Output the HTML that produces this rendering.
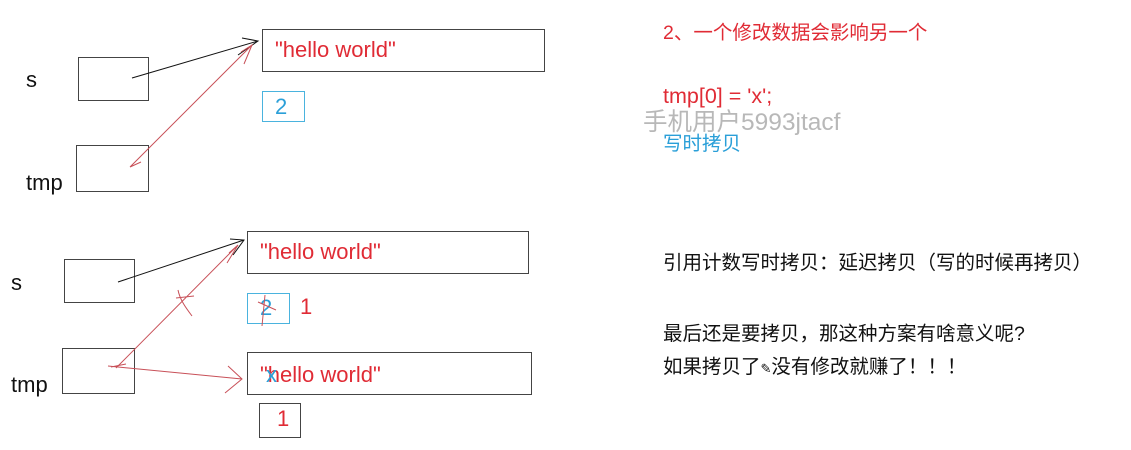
<!DOCTYPE html>
<html><head><meta charset="utf-8"><style>
html,body{margin:0;padding:0;background:#fff;width:1131px;height:450px;overflow:hidden;position:relative}
.a{position:absolute;white-space:nowrap;font-family:"Liberation Sans","Noto Sans CJK SC",sans-serif;line-height:1.2}
.b{position:absolute;border:1.5px solid #444;box-sizing:border-box}
.r{color:#e02b35}.k{color:#111}.bl{color:#2a9fd8}
</style></head><body>
<div class="b" style="left:78px;top:57px;width:71px;height:44px"></div>
<div class="b" style="left:76px;top:145px;width:73px;height:47px"></div>
<div class="b" style="left:262px;top:29px;width:283px;height:43px"></div>
<div class="b" style="left:262px;top:91px;width:43px;height:31px;border-color:#4ab3de"></div>
<div class="a k" style="left:26px;top:67px;font-size:22px">s</div>
<div class="a k" style="left:26px;top:170px;font-size:22px">tmp</div>
<div class="a r" style="left:275px;top:37px;font-size:22px">"hello world"</div>
<div class="a bl" style="left:275px;top:94px;font-size:22px">2</div>

<div class="b" style="left:64px;top:259px;width:71px;height:44px"></div>
<div class="b" style="left:62px;top:348px;width:73px;height:46px"></div>
<div class="b" style="left:247px;top:231px;width:282px;height:43px"></div>
<div class="b" style="left:247px;top:293px;width:43px;height:31px;border-color:#4ab3de"></div>
<div class="b" style="left:247px;top:352px;width:285px;height:43px"></div>
<div class="b" style="left:259px;top:403px;width:42px;height:35px"></div>
<div class="a k" style="left:11px;top:270px;font-size:22px">s</div>
<div class="a k" style="left:11px;top:372px;font-size:22px">tmp</div>
<div class="a r" style="left:260px;top:239px;font-size:22px">"hello world"</div>
<div class="a bl" style="left:260px;top:295px;font-size:22px">2</div>
<div class="a r" style="left:300px;top:294px;font-size:22px">1</div>
<div class="a r" style="left:260px;top:362px;font-size:22px">"hello world"</div>
<div class="a bl" style="left:266px;top:362px;font-size:22px">x</div>
<div class="a r" style="left:277px;top:406px;font-size:22px">1</div>

<svg width="1131" height="450" style="position:absolute;left:0;top:0">
<g fill="none" stroke-width="1">
<path d="M132 78 L258 41 M242 38 L258 41 L238 55" stroke="#111"/>
<path d="M130 167 L252 45 M241 52 L252 45 L244 64 M130 167 L141 162" stroke="#c85058"/>
<path d="M118 282 L244 240 M230 239 L244 240 L233 255" stroke="#111"/>
<path d="M116 368 L238 245 M229 253 L238 245 L227 263 M178 290 C180 300 186 308 192 316 M176 298 L194 296" stroke="#c85058"/>
<path d="M108 366 L242 379 M228 366 L242 379 L225 393 M111 367 L126 364" stroke="#c85058"/>
<path d="M258 302 L276 310 M265 295 L262 326" stroke="#c85058"/>
</g></svg>

<div class="a r" style="left:663px;top:22px;font-size:19.5px">2、一个修改数据会影响另一个</div>
<div class="a r" style="left:663px;top:84px;font-size:21.5px">tmp[0] = 'x';</div>
<div class="a" style="left:643px;top:108px;font-size:24.5px;color:#b8b8b8">手机用户5993jtacf</div>
<div class="a bl" style="left:663px;top:133px;font-size:19.5px">写时拷贝</div>
<div class="a k" style="left:663px;top:252px;font-size:19.5px">引用计数写时拷贝：延迟拷贝（写的时候再拷贝）</div>
<div class="a k" style="left:663px;top:323px;font-size:19.5px">最后还是要拷贝，那这种方案有啥意义呢?</div>
<div class="a k" style="left:663px;top:356px;font-size:19.5px">如果拷贝了<span style="font-size:13px">✎</span>没有修改就赚了！！！</div>
</body></html>
